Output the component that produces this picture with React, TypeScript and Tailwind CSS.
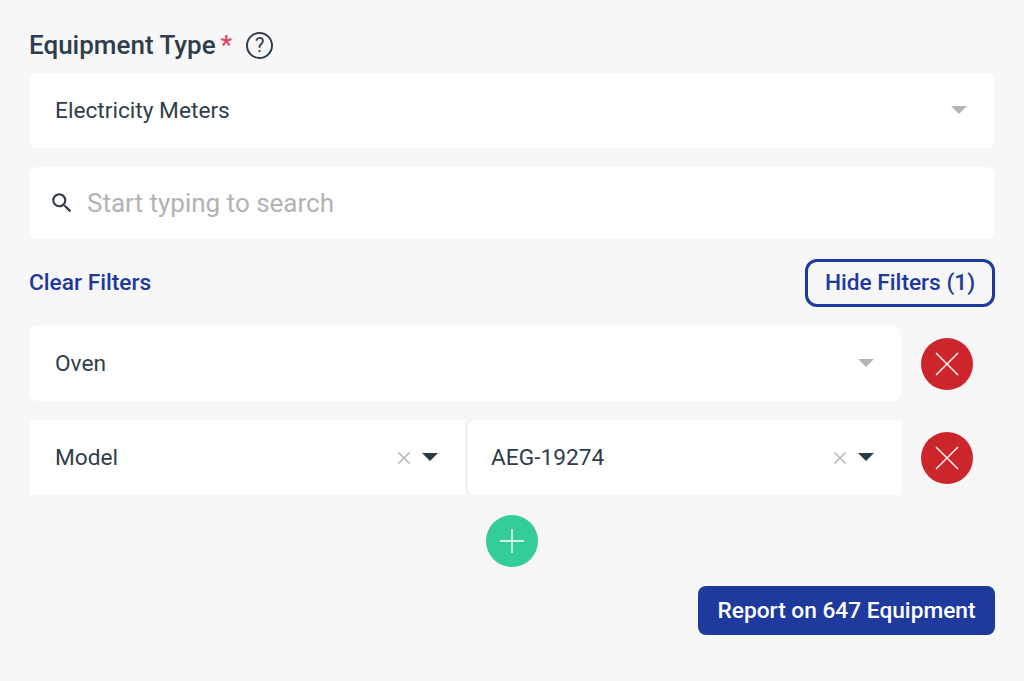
function Caret({ color }: { color: string }) {
  return (
    <svg width="16" height="8" viewBox="0 0 16 8" className={`-mt-px ${color}`}>
      <path d="M0 0h16L8 8z" fill="currentColor" />
    </svg>
  );
}

function SmallX() {
  return (
    <svg width="12" height="12" viewBox="0 0 12 12" className="text-[#bdbdbd]">
      <path d="M.5.5l11 11M11.5.5l-11 11" stroke="currentColor" strokeWidth="1.6" fill="none" />
    </svg>
  );
}

function RemoveButton() {
  return (
    <button className="flex h-[52px] w-[52px] shrink-0 items-center justify-center rounded-full bg-[#cc262c]">
      <svg width="24" height="24" viewBox="0 0 24 24">
        <path d="M1 1l22 22M23 1L1 23" stroke="#fff" strokeWidth="1.4" fill="none" />
      </svg>
    </button>
  );
}

function RowField({ value, className }: { value: string; className: string }) {
  return (
    <div className={`flex h-[75px] items-center ${className}`}>
      <span className="flex-1 pt-px">{value}</span>
      <SmallX />
      <span className="ml-[12px] flex">
        <Caret color="text-[#2c3a47]" />
      </span>
    </div>
  );
}

export default function App() {
  return (
    <div className="h-[681px] w-[1024px] overflow-hidden bg-[#f7f7f7] px-[29px] pt-[28px] font-['Roboto',sans-serif] text-[22.7px] text-[#2f3e4a]">
      <div className="flex h-[34px] items-center">
        <span className="text-[26px] font-medium">Equipment Type</span>
        <span className="ml-[5px] text-[26px] font-medium text-[#e5405e]">*</span>
        <span className="ml-[14px] flex h-[27px] w-[27px] items-center justify-center rounded-full border-2 border-[#2f3e4a] text-[20px]">
          ?
        </span>
      </div>

      <div className="mt-[11px] flex h-[75px] items-center justify-between rounded-lg bg-white pl-[26px] pr-[28px]">
        <span className="pt-[2px]">Electricity Meters</span>
        <Caret color="text-[#b5b5b5]" />
      </div>

      <div className="mt-[19px] flex h-[72px] items-center rounded-lg bg-white pl-[20px]">
        <svg width="26" height="26" viewBox="0 0 24 24" className="text-[#2f3e4a]">
          <path
            fill="currentColor"
            d="M15.5 14h-.79l-.28-.27A6.471 6.471 0 0 0 16 9.5 6.5 6.5 0 1 0 9.5 16c1.61 0 3.09-.59 4.23-1.57l.27.28v.79l5 4.99L20.49 19l-4.99-5zm-6 0C7.01 14 5 11.99 5 9.5S7.01 5 9.5 5 14 7.01 14 9.5 11.99 14 9.5 14z"
          />
        </svg>
        <span className="ml-[12px] text-[26px] text-[#b3b3b3]">Start typing to search</span>
      </div>

      <div className="mt-[20px] flex h-[48px] items-center justify-between">
        <span className="text-[22.7px] font-medium text-[#1d3a9c]">Clear Filters</span>
        <button className="h-[48px] w-[190px] rounded-xl border-[3px] border-[#1d3a9c] text-[22.7px] font-medium text-[#1d3a9c]">
          Hide Filters (1)
        </button>
      </div>

      <div className="mt-[19px] flex items-center gap-[20px]">
        <div className="flex h-[75px] w-[872px] items-center justify-between rounded-lg bg-white pl-[26px] pr-[27px]">
          <span className="pt-[2px]">Oven</span>
          <Caret color="text-[#b5b5b5]" />
        </div>
        <RemoveButton />
      </div>

      <div className="mt-[19px] flex items-center gap-[20px]">
        <div className="flex w-[872px]">
          <RowField value="Model" className="w-[436px] bg-white pl-[26px] pr-[27px]" />
          <RowField
            value="AEG-19274"
            className="ml-px w-[435px] rounded-l-lg border-l border-[#e4e4e4] bg-white pl-[24px] pr-[27px]"
          />
        </div>
        <RemoveButton />
      </div>

      <div className="mt-[20px] flex justify-center">
        <button className="flex h-[52px] w-[52px] items-center justify-center rounded-full bg-[#35cd97]">
          <svg width="24" height="24" viewBox="0 0 24 24">
            <path d="M12 0v24M0 12h24" stroke="#fff" strokeWidth="1.4" fill="none" />
          </svg>
        </button>
      </div>

      <div className="mt-[19px] flex justify-end">
        <button className="h-[49px] w-[297px] rounded-lg bg-[#1d3a9c] pt-[2px] text-[22.7px] font-medium text-white">
          Report on 647 Equipment
        </button>
      </div>
    </div>
  );
}
